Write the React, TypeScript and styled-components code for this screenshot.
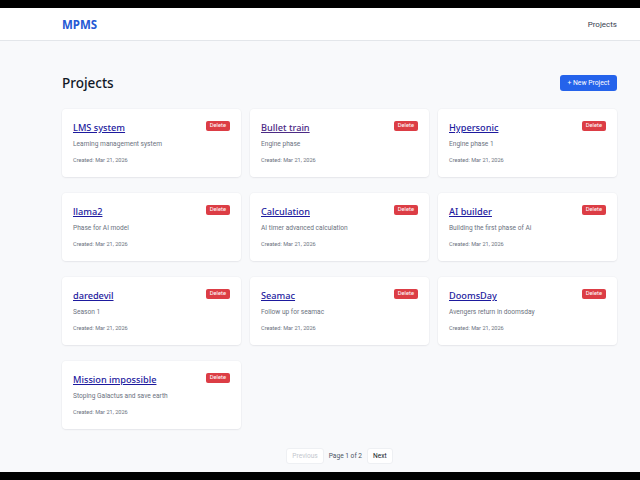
import React from 'react';
import styled, { createGlobalStyle } from 'styled-components';

const GlobalStyle = createGlobalStyle`
  html, body {
    margin: 0;
    padding: 0;
    background: #000;
  }
  body {
    font-family: "Noto Sans", "Open Sans", Roboto, sans-serif;
  }
`;

const Frame = styled.div`
  height: 480px;
  display: flex;
  flex-direction: column;
  background: #000;
`;

const Bar = styled.div`
  height: 8px;
  flex-shrink: 0;
  background: #000;
`;

const Screen = styled.div`
  flex: 1;
  background: #f8f9fb;
  overflow: hidden;
  display: flex;
  flex-direction: column;
`;

const Navbar = styled.header`
  height: 32px;
  background: #ffffff;
  border-bottom: 1px solid #e3e6ea;
  display: flex;
  align-items: center;
  justify-content: space-between;
  padding: 0 23px 0 62px;
  flex-shrink: 0;
`;

const Brand = styled.div`
  color: #2559d4;
  font-weight: 700;
  font-size: 11.5px;
`;

const NavLink = styled.a`
  color: #374151;
  font-size: 8px;
  font-family: Roboto, "Noto Sans", sans-serif;
  text-decoration: none;
`;

const Main = styled.main`
  padding: 0 23px 0 62px;
  display: flex;
  flex-direction: column;
`;

const Header = styled.div`
  display: flex;
  justify-content: space-between;
  align-items: center;
  margin-top: 33px;
  margin-bottom: 17px;
  height: 18px;
`;

const Title = styled.h1`
  font-size: 13.5px;
  font-weight: 500;
  color: #111827;
  margin: 0;
`;

const PrimaryButton = styled.button`
  height: 16px;
  width: 57px;
  padding: 0;
  border: none;
  border-radius: 3px;
  background: #2563eb;
  color: #ffffff;
  font-family: Roboto, "Noto Sans", sans-serif;
  font-size: 6.8px;
  font-weight: 400;
  cursor: pointer;
`;

const Grid = styled.div`
  display: grid;
  grid-template-columns: repeat(3, 1fr);
  column-gap: 9px;
  row-gap: 16px;
`;

const Card = styled.div`
  height: 68px;
  box-sizing: border-box;
  background: #ffffff;
  border-radius: 4px;
  box-shadow: 0 1px 2px rgba(15, 23, 42, 0.06), 0 0 0 1px rgba(15, 23, 42, 0.02);
  padding: 11px 11px 0 11px;
  display: flex;
  flex-direction: column;
`;

const CardTop = styled.div`
  display: flex;
  justify-content: space-between;
  align-items: flex-start;
`;

const CardTitle = styled.a<{ $visited?: boolean }>`
  margin-top: 1px;
  font-size: 9.2px;
  font-weight: 500;
  line-height: 14px;
  color: ${props => (props.$visited ? '#4c2a85' : '#1d1a9e')};
  text-decoration: underline;
  text-underline-offset: 1px;
`;

const DeleteButton = styled.button`
  margin-top: 1px;
  height: 9.5px;
  padding: 0 4px;
  border: none;
  border-radius: 2px;
  background: #dc3d45;
  color: #ffffff;
  font-family: Roboto, "Noto Sans", sans-serif;
  font-size: 5.8px;
  line-height: 9.5px;
  cursor: pointer;
`;

const Description = styled.p`
  margin: 4px 0 0 0;
  font-family: Roboto, "Noto Sans", sans-serif;
  font-size: 6.6px;
  color: #6b7280;
  line-height: 10px;
`;

const Meta = styled.p`
  margin: 7px 0 0 0;
  font-family: Roboto, "Noto Sans", sans-serif;
  font-size: 5.6px;
  color: #6b7280;
  line-height: 8px;
`;

const Pagination = styled.div`
  margin-top: 19px;
  display: flex;
  justify-content: center;
  align-items: center;
  gap: 5px;
`;

const PageButton = styled.button<{ $disabled?: boolean }>`
  height: 16px;
  padding: 0 5px;
  background: #ffffff;
  border: 1px solid #eef0f3;
  border-radius: 3px;
  font-family: Roboto, "Noto Sans", sans-serif;
  font-size: 6.6px;
  color: ${props => (props.$disabled ? '#c4c8ce' : '#111827')};
  cursor: ${props => (props.$disabled ? 'default' : 'pointer')};
`;

const PageInfo = styled.span`
  font-family: Roboto, "Noto Sans", sans-serif;
  font-size: 6.6px;
  color: #4b5563;
`;

type Project = {
  id: number;
  name: string;
  description: string;
  visited?: boolean;
};

const projects: Project[] = [
  { id: 1, name: 'LMS system', description: 'Learning management system' },
  { id: 2, name: 'Bullet train', description: 'Engine phase', visited: true },
  { id: 3, name: 'Hypersonic', description: 'Engine phase 1' },
  { id: 4, name: 'llama2', description: 'Phase for AI model' },
  { id: 5, name: 'Calculation', description: 'AI timer advanced calculation' },
  { id: 6, name: 'AI builder', description: 'Building the first phase of Ai' },
  { id: 7, name: 'daredevil', description: 'Season 1' },
  { id: 8, name: 'Seamac', description: 'Follow up for seamac' },
  { id: 9, name: 'DoomsDay', description: 'Avengers return in doomsday' },
  { id: 10, name: 'Mission impossible', description: 'Stoping Galactus and save earth' },
];

const App: React.FC = () => {
  return (
    <>
      <GlobalStyle />
      <Frame>
        <Bar />
        <Screen>
          <Navbar>
            <Brand>MPMS</Brand>
            <NavLink href="#">Projects</NavLink>
          </Navbar>
          <Main>
            <Header>
              <Title>Projects</Title>
              <PrimaryButton>+ New Project</PrimaryButton>
            </Header>
            <Grid>
              {projects.map((project) => (
                <Card key={project.id}>
                  <CardTop>
                    <CardTitle href="#" $visited={project.visited}>{project.name}</CardTitle>
                    <DeleteButton>Delete</DeleteButton>
                  </CardTop>
                  <Description>{project.description}</Description>
                  <Meta>Created: Mar 21, 2026</Meta>
                </Card>
              ))}
            </Grid>
            <Pagination>
              <PageButton $disabled>Previous</PageButton>
              <PageInfo>Page 1 of 2</PageInfo>
              <PageButton>Next</PageButton>
            </Pagination>
          </Main>
        </Screen>
        <Bar />
      </Frame>
    </>
  );
};

export default App;
